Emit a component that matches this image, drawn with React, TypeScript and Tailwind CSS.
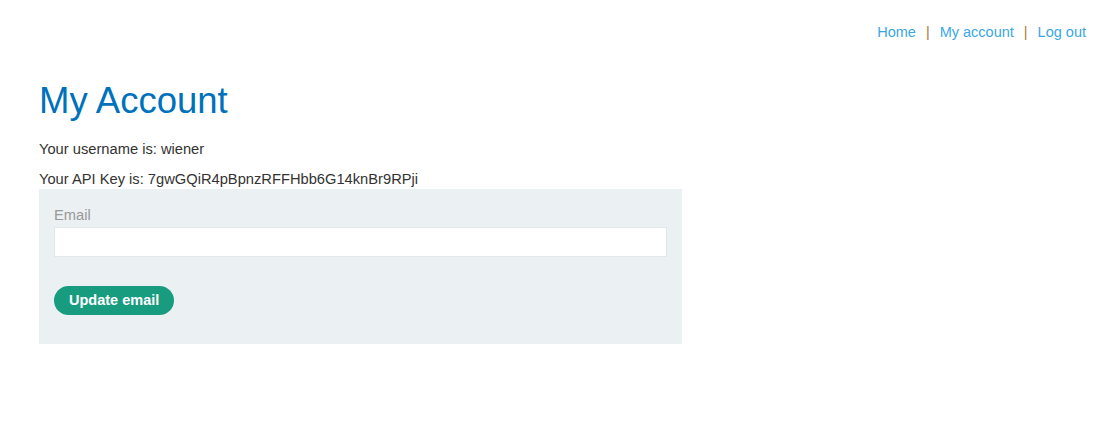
export default function App() {
  return (
    <div className="min-h-screen bg-white font-['Liberation_Sans',Arial,sans-serif] text-[#333332]">
      {/* Top nav */}
      <header className="flex justify-end pt-[21px] pr-[34px] text-[14.5px] leading-[22px]">
        <a href="#" className="text-[#3aa7e4]">Home</a>
        <span className="mx-[10px] text-[#a87a3a]">|</span>
        <a href="#" className="text-[#3aa7e4]">My account</a>
        <span className="mx-[10px] text-[#a87a3a]">|</span>
        <a href="#" className="text-[#3aa7e4]">Log out</a>
      </header>

      <main className="px-[39px]">
        <h1 className="mt-[36px] text-[36.5px] leading-[44px] text-[#0071bc]">My Account</h1>
        <p className="mt-[16px] text-[14.7px] leading-[20px]">Your username is: wiener</p>
        <p className="mt-[10px] text-[14.7px] leading-[20px]">Your API Key is: 7gwGQiR4pBpnzRFFHbb6G14knBr9RPji</p>

        <form className="w-[643px] bg-[#ebf0f2] px-[15px] pt-[17px] pb-[29px]">
          <label className="block text-[14.7px] leading-[18px] text-[#999]">Email</label>
          <input
            type="email"
            className="mt-[3px] block h-[30px] w-full border border-[#e3e6e8] bg-white px-2 outline-none"
          />
          <button
            type="button"
            className="mt-[29px] h-[29px] rounded-full bg-[#189c80] px-[15px] text-[14.5px] font-bold text-white"
          >
            Update email
          </button>
        </form>
      </main>
    </div>
  );
}
